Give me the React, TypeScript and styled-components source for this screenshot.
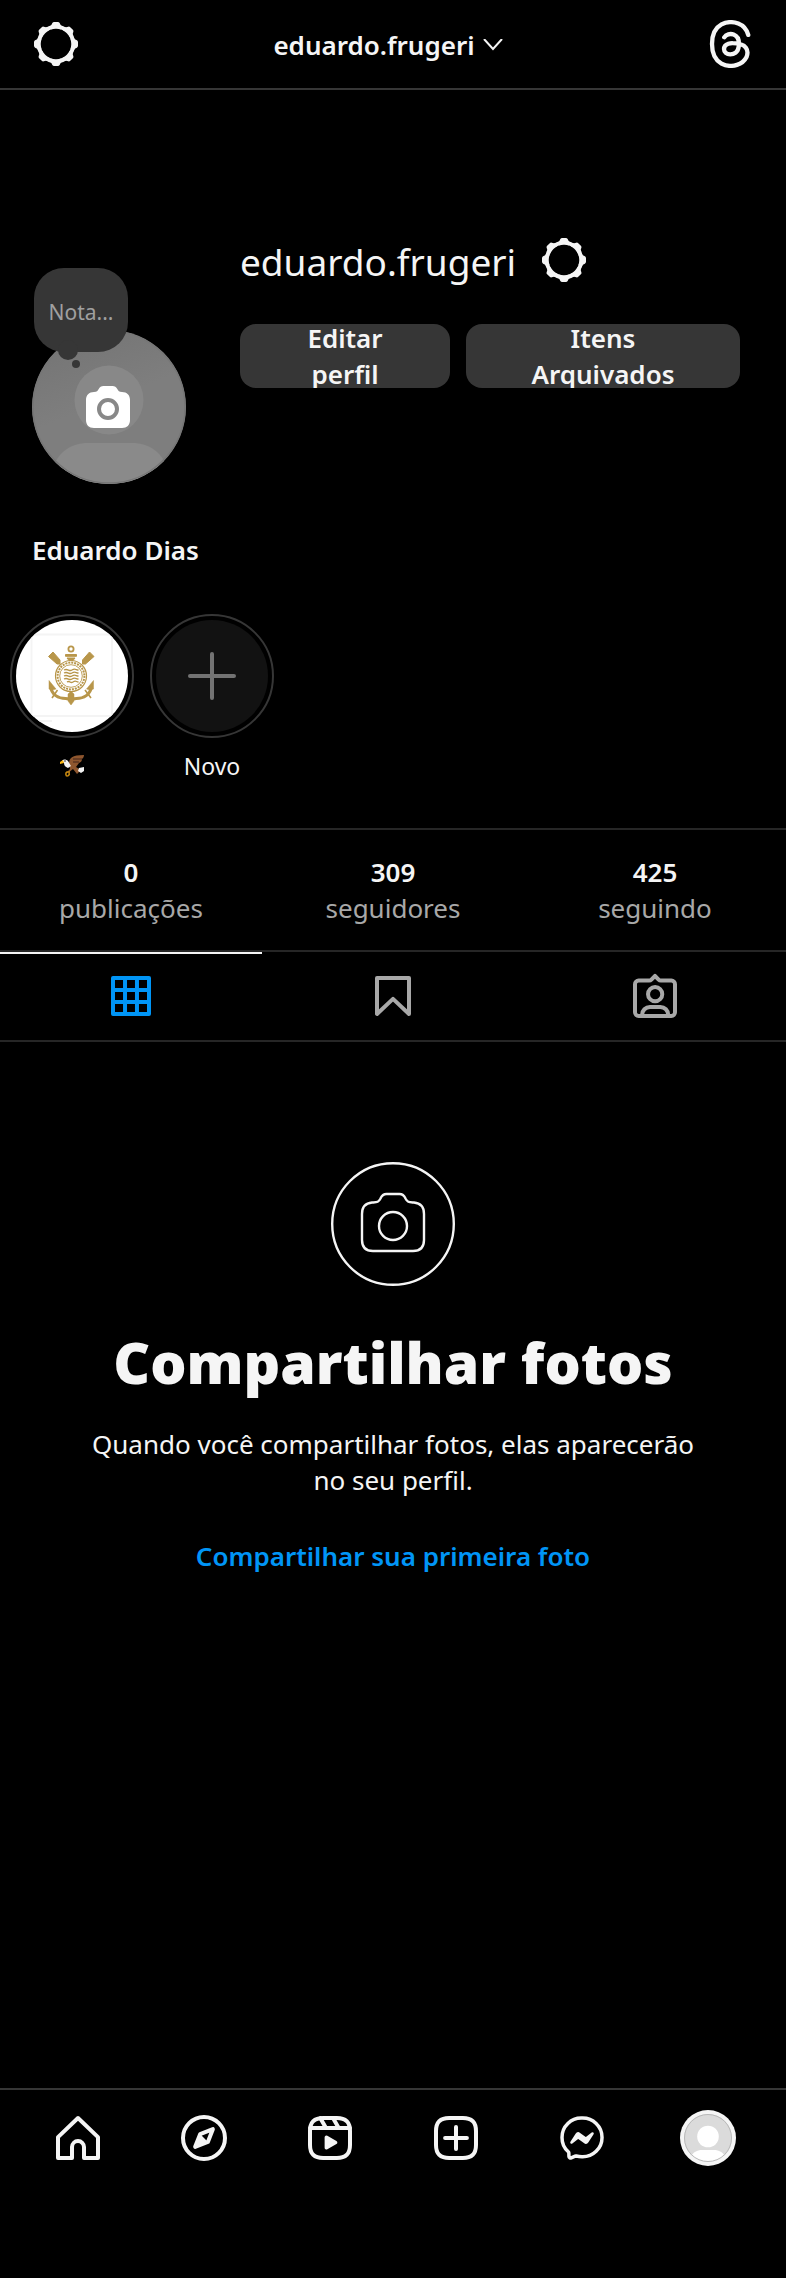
import React from "react";
import styled, { createGlobalStyle } from "styled-components";

const GlobalStyle = createGlobalStyle`
  * { box-sizing: border-box; }
  body {
    margin: 0;
    background: #000;
    color: #f5f5f5;
    font-family: "Noto Sans", "Open Sans", sans-serif;
    font-size: 26px;
    line-height: 36px;
  }
  h1, h2, p, ul, dl, dd { margin: 0; padding: 0; }
  ul { list-style: none; }
  a { color: inherit; text-decoration: none; }
  button {
    margin: 0;
    padding: 0;
    border: 0;
    background: none;
    color: inherit;
    font: inherit;
    cursor: pointer;
  }
  svg { display: block; flex: none; }
`;

const Page = styled.div`
  display: flex;
  flex-direction: column;
  min-height: 100vh;
`;

const TopBar = styled.header`
  display: flex;
  align-items: center;
  justify-content: space-between;
  height: 90px;
  padding: 0 32px;
  border-bottom: 2px solid #363636;
`;

const AccountSwitch = styled.button`
  display: flex;
  align-items: center;
  gap: 8px;
  padding: 2px 10px 0 0;
  font-weight: 600;
`;

const IconButton = styled.button`
  display: flex;
`;

const Main = styled.main`
  flex: 1;
`;

const Profile = styled.section`
  display: grid;
  grid-template-columns: 154px minmax(0, 500px);
  column-gap: 54px;
  padding: 144px 46px 0 32px;
`;

const AvatarArea = styled.div`
  position: relative;
  padding-top: 96px;
`;

const AvatarButton = styled.button`
  display: block;
`;

const Note = styled.button`
  position: absolute;
  top: 34px;
  left: 2px;
  width: 94px;
  height: 84px;
  padding-top: 4px;
  border-radius: 30px;
  background: #363636;
  color: #a0a0a0;
  font-size: 21px;
  line-height: 28px;

  &::before,
  &::after {
    content: "";
    position: absolute;
    border-radius: 50%;
    background: #363636;
  }
  &::before {
    top: 72px;
    left: 24px;
    width: 20px;
    height: 20px;
  }
  &::after {
    top: 92px;
    left: 38px;
    width: 8px;
    height: 8px;
  }
`;

const Details = styled.div`
  display: flex;
  flex-direction: column;
  gap: 38px;
`;

const NameRow = styled.div`
  display: flex;
  align-items: center;
  gap: 24px;
  height: 52px;
`;

const Username = styled.h2`
  padding-top: 4px;
  font-size: 37px;
  font-weight: 400;
  line-height: 48px;
`;

const Actions = styled.div`
  display: grid;
  grid-template-columns: 210fr 274fr;
  gap: 16px;
`;

const ActionButton = styled.button`
  display: flex;
  align-items: center;
  justify-content: center;
  height: 64px;
  padding: 0 32px;
  border-radius: 16px;
  overflow: hidden;
  background: #363636;
  font-weight: 600;
  text-align: center;
`;

const ButtonText = styled.span<{ $width: number }>`
  max-width: ${(p) => p.$width}px;
`;

const FullName = styled.h1`
  padding: 48px 32px 0;
  font-size: 26px;
  font-weight: 600;
  line-height: 36px;
`;

const Highlights = styled.ul`
  display: flex;
  gap: 16px;
  padding: 46px 10px 46px;
`;

const Highlight = styled.button`
  display: flex;
  flex-direction: column;
  align-items: center;
  gap: 12px;
  width: 124px;
  font-size: 23px;
  line-height: 32px;
`;

const Ring = styled.span<{ $fill: string }>`
  display: flex;
  width: 124px;
  height: 124px;
  padding: 4px;
  border: 2px solid #363636;
  border-radius: 50%;

  > svg {
    border-radius: 50%;
    background: ${(p) => p.$fill};
  }
`;

const Caption = styled.span`
  display: flex;
  align-items: center;
  height: 32px;
`;

const Stats = styled.ul`
  display: grid;
  grid-template-columns: repeat(3, 1fr);
  padding: 24px 0;
  border-top: 2px solid #262626;
  text-align: center;
`;

const Stat = styled.a`
  display: block;
  color: #a8a8a8;

  strong {
    display: block;
    color: #f5f5f5;
    font-weight: 600;
  }
`;

const Tabs = styled.nav`
  display: grid;
  grid-template-columns: repeat(3, 1fr);
  height: 92px;
  border-top: 2px solid #262626;
  border-bottom: 2px solid #262626;
`;

const Tab = styled.a<{ $active?: boolean }>`
  display: flex;
  align-items: center;
  justify-content: center;
  border-top: 2px solid ${(p) => (p.$active ? "#f5f5f5" : "transparent")};
  padding-bottom: 2px;
  color: ${(p) => (p.$active ? "#0095f6" : "#a8a8a8")};
`;

const Empty = styled.section`
  display: flex;
  flex-direction: column;
  align-items: center;
  padding: 120px 88px;
  text-align: center;
`;

const EmptyTitle = styled.h2`
  margin-top: 40px;
  font-family: "Open Sans", "Noto Sans", sans-serif;
  font-size: 57px;
  font-weight: 800;
  line-height: 72px;
`;

const EmptyText = styled.p`
  margin-top: 28px;
`;

const ShareButton = styled.button`
  margin-top: 40px;
  color: #0095f6;
  font-weight: 600;
`;

const BottomNav = styled.nav`
  display: flex;
  height: 190px;
  padding: 0 15px 92px;
  border-top: 2px solid #363636;
`;

const NavLink = styled.a`
  display: flex;
  flex: 1;
  align-items: center;
  justify-content: center;
`;

type IconProps = { children: React.ReactNode; viewBox?: string; width?: number };

const Icon = ({ children, viewBox = "0 0 24 24", width = 2 }: IconProps) => (
  <svg
    width="48"
    height="48"
    viewBox={viewBox}
    fill="none"
    stroke="currentColor"
    strokeWidth={width}
    strokeLinecap="round"
    strokeLinejoin="round"
    aria-hidden="true"
  >
    {children}
  </svg>
);

const GearIcon = () => (
  <Icon>
    <circle cx="12" cy="12" r="8.635" />
    <path d="M14.232 3.656a1.269 1.269 0 0 1-.796-.66L12.93 2h-1.86l-.505.996a1.269 1.269 0 0 1-.796.66m-.001 16.688a1.269 1.269 0 0 1 .796.66l.505.996h1.862l.505-.996a1.269 1.269 0 0 1 .796-.66M3.656 9.768a1.269 1.269 0 0 1-.66.796L2 11.07v1.862l.996.505a1.269 1.269 0 0 1 .66.796m16.688-.001a1.269 1.269 0 0 1 .66-.796L22 12.93v-1.86l-.996-.505a1.269 1.269 0 0 1-.66-.796M7.678 4.522a1.269 1.269 0 0 1-1.03.096l-1.06-.348L4.27 5.587l.348 1.062a1.269 1.269 0 0 1-.096 1.03m11.8 11.799a1.269 1.269 0 0 1 1.03-.096l1.06.348 1.318-1.317-.348-1.062a1.269 1.269 0 0 1 .096-1.03m-14.956.001a1.269 1.269 0 0 1 .096 1.03l-.348 1.06 1.317 1.318 1.062-.348a1.269 1.269 0 0 1 1.03.096m11.799-11.8a1.269 1.269 0 0 1-.096-1.03l.348-1.06-1.317-1.318-1.062.348a1.269 1.269 0 0 1-1.03-.096" />
  </Icon>
);

const ThreadsIcon = () => (
  <Icon viewBox="2 2 20 20" width={1.8}>
    <path d="M19.6 8.2c-1.5-5.5-7.2-5.3-7.2-5.3s-7.9-.5-7.9 9.1 7.9 9.1 7.9 9.1 4.5.2 6.5-3.7c1-2.6.2-5.8-5.8-5.8 0 0-3.6-.1-3.6 2.5 0 1.3 1.1 2.2 2.6 2.2s3.2-.8 3.5-3.1c.9-6-4.500-6.400-6-4" />
  </Icon>
);

const ChevronIcon = () => (
  <svg width="20" height="12" viewBox="0 0 20 12" fill="none" stroke="currentColor" strokeWidth="2" aria-hidden="true">
    <path d="m1 0 9 10 9-10" />
  </svg>
);

const AvatarArt = () => (
  <svg width="154" height="154" viewBox="0 0 154 154" aria-hidden="true">
    <defs>
      <clipPath id="avatar-clip"><circle cx="77" cy="77" r="77" /></clipPath>
      <linearGradient id="avatar-shade" x1="0.2" y1="0" x2="0.4" y2="0.5">
        <stop offset="0" stopColor="#747474" />
        <stop offset="1" stopColor="#7e7e7e" />
      </linearGradient>
    </defs>
    <g clipPath="url(#avatar-clip)">
      <rect width="154" height="154" fill="url(#avatar-shade)" />
      <circle cx="77" cy="70" r="34.500" fill="#888" />
      <path d="M22 135c5-12 16-22 34-22h44c18 0 29 10 34 22v19H22z" fill="#8a8a8a" />
    </g>
    <circle cx="77" cy="77" r="76" fill="none" stroke="#767676" strokeWidth="1.500" />
    <path
      d="M62 62c3 0 3.600-1 4.700-3 1-2 2.600-3 4.800-3h9c2.200 0 3.800 1 4.800 3 1.100 2 1.700 3 4.700 3 5 0 8 3 8 8v20c0 5-3 8-8 8H62c-5 0-8-3-8-8V70c0-5 3-8 8-8z"
      fill="#fff"
    />
    <circle cx="76" cy="79" r="9" fill="#fff" stroke="#888" strokeWidth="4" />
  </svg>
);

const CrestArt = () => (
  <svg width="112" height="112" viewBox="0 0 112 112" fill="none" stroke="#b8964a" aria-hidden="true">
    <path d="M14 14.500h83M14 96h83M15.500 14v82M96 14v82" stroke="#f4f4f4" strokeWidth="2" />
    <path d="M22 101h14" stroke="#f3f3f3" strokeWidth="2" />
    <circle cx="55" cy="29" r="2.600" strokeWidth="1.800" />
    <path d="M49.500 34.500h11v1.800h-11zM51 38h8l-2 2.500h-4z" fill="#b8964a" />
    <path d="m32.500 36.500 4.500-4.500 7 8v4h-3zM78 36.500 73.500 32l-7 8v4h3z" fill="#b8964a" />
    <path d="m41.500 70-5.500 8M69 70l6 8" strokeWidth="1.600" />
    <circle cx="55" cy="56" r="15.500" strokeWidth="1.200" />
    <circle cx="55" cy="56" r="13.400" strokeWidth="2" strokeDasharray="2 1" />
    <circle cx="55" cy="56" r="11.300" strokeWidth="0.900" />
    <path
      d="M48 50c4-2 5 2 8 0s4 0 6.500 0M48 53c4-2 5 2 8 0s4 0 6.500 0M48 56c4-2 5 2 8 0s4 0 6.500 0M48 59c4-2 5 2 8 0s4 0 6.500 0M51 62c3-2 3 2 6 0s3 0 5.500 0"
      strokeWidth="1.300"
    />
    <path d="M34.500 66c1 9 8 12.500 15 12.500 3 0 5 1 5.500 3 .5-2 2.500-3 5.500-3 7 0 14-3.500 15-12.500" strokeWidth="3" />
    <path d="M33 60.500 40 69l-3.500 1-3.500-1zM77.500 60.500 70.500 69l3.500 1 3.500-1zM52 74l3-3 3 3v7l-3 4-3-4z" fill="#b8964a" strokeWidth="0.500" />
  </svg>
);

const EagleArt = () => (
  <svg width="26" height="24" viewBox="0 0 26 24" role="img" aria-label="Águia">
    <path d="M10 10C10 4 13 1 25 1c0 2-1 3-2 4 0 2-1 3-3 4l-3 4 5 3-4 4-4-5-5 4-1-1 3-3z" fill="#8e562e" />
    <path d="M14 5h9M14 8h6" stroke="#42241b" strokeWidth="1" />
    <path d="M3 7c1-2 4-2 6 0l3 5-3 2c-3-1-4-3-4-5z" fill="#f2f2f2" />
    <path d="M4 6 1 8v2l4-1z" fill="#fcb813" />
    <path d="m20 14 5-1v4l-3 2-3-2z" fill="#f2f2f2" />
    <circle cx="6" cy="7" r="0.800" fill="#222" />
    <path d="M11 18H8c-2 1-1 4 0 4s3-1 2-3" fill="none" stroke="#c98a10" strokeWidth="1.600" />
  </svg>
);

const PlusArt = () => (
  <svg width="112" height="112" viewBox="0 0 112 112" stroke="#737373" strokeWidth="4" strokeLinecap="round" aria-hidden="true">
    <path d="M56 34v44M34 56h44" />
  </svg>
);

const CameraArt = () => (
  <svg width="124" height="124" viewBox="0 0 124 124" fill="none" stroke="currentColor" strokeWidth="2.400" aria-hidden="true">
    <circle cx="62" cy="62" r="60.800" />
    <path d="M31 52c0-8 4-11 10-11.500 5-.3 6.500 0 8.500-4 1.500-3.500 3-4.500 6-4.500h13c3 0 4.500 1 6 4.500 2 4 3.500 3.700 8.500 4C89 41 93 44 93 52v26c0 7-4 11-11 11H42c-7 0-11-4-11-11z" />
    <circle cx="62" cy="64" r="14" />
  </svg>
);

const GridIcon = () => (
  <Icon>
    <rect x="3" y="3" width="18" height="18" />
    <path d="M9.015 3v18M14.985 3v18M21 9.015H3M21 14.985H3" />
  </Icon>
);

const SavedIcon = () => (
  <Icon>
    <path d="M20 21 12 13.440 4 21V3h16z" />
  </Icon>
);

const TaggedIcon = () => (
  <Icon>
    <path d="M10.201 3.797 12 1.997l1.799 1.8a1.59 1.59 0 0 0 1.124.465h5.259A1.818 1.818 0 0 1 22 6.08v14.104a1.818 1.818 0 0 1-1.818 1.818H3.818A1.818 1.818 0 0 1 2 20.184V6.08a1.818 1.818 0 0 1 1.818-1.818h5.26a1.59 1.59 0 0 0 1.123-.465Z" />
    <path d="M18.598 22.002V21.4a3.949 3.949 0 0 0-3.948-3.949H9.495A3.949 3.949 0 0 0 5.546 21.4v.603" />
    <circle cx="12.072" cy="11.075" r="3.556" />
  </Icon>
);

const HomeIcon = () => (
  <Icon>
    <path d="M9.005 16.545a2.997 2.997 0 0 1 2.997-2.997A2.997 2.997 0 0 1 15 16.545V22h7V11.543L12 2 2 11.543V22h7.005Z" />
  </Icon>
);

const ExploreIcon = () => (
  <Icon>
    <path d="m13.941 13.953-6.360 2.471 2.479-6.368 6.360-2.471z" />
    <path d="m10.060 10.056 3.889 3.889-6.368 2.479z" fill="currentColor" stroke="none" />
    <circle cx="12" cy="12" r="10.500" />
  </Icon>
);

const roundedSquare =
  "M2 12v3.450c0 2.849.698 4.005 1.606 4.944.94.909 2.098 1.608 4.946 1.608h6.896c2.848 0 4.006-.7 4.946-1.608C21.302 19.455 22 18.300 22 15.450V8.552c0-2.849-.698-4.006-1.606-4.945C19.454 2.700 18.296 2 15.448 2H8.552c-2.848 0-4.006.699-4.946 1.607C2.698 4.547 2 5.703 2 8.552Z";

const ReelsIcon = () => (
  <Icon>
    <path d={roundedSquare} />
    <path d="M2.049 7.002h19.901M13.504 2.001l2.858 5.001M7.207 2.110l2.795 4.892" />
    <path
      d="M9.763 17.664a.908.908 0 0 1-.454-.787V11.630a.909.909 0 0 1 1.364-.788l4.545 2.624a.909.909 0 0 1 0 1.575l-4.545 2.624a.91.91 0 0 1-.91 0Z"
      fill="currentColor"
      stroke="none"
    />
  </Icon>
);

const CreateIcon = () => (
  <Icon>
    <path d={roundedSquare} />
    <path d="M6.545 12.001h10.910M12.003 6.545v10.910" />
  </Icon>
);

const MessengerIcon = () => (
  <Icon width={1.739}>
    <path d="M12.003 2.001a9.705 9.705 0 1 1 0 19.4 10.876 10.876 0 0 1-2.895-.384.798.798 0 0 0-.533.04l-1.984.876a.801.801 0 0 1-1.123-.708l-.054-1.78a.806.806 0 0 0-.27-.569 9.49 9.49 0 0 1-3.14-7.175 9.65 9.65 0 0 1 10-9.7Z" />
    <path
      d="M17.79 10.132a.659.659 0 0 0-.962-.873l-2.556 2.05a.63.63 0 0 1-.758.002L11.06 9.47a1.576 1.576 0 0 0-2.277.42l-2.567 3.98a.659.659 0 0 0 .961.875l2.556-2.049a.63.63 0 0 1 .759-.002l2.452 1.84a1.576 1.576 0 0 0 2.278-.42Z"
      fill="currentColor"
      stroke="none"
    />
  </Icon>
);

const MiniAvatar = () => (
  <svg width="56" height="56" viewBox="0 0 56 56" aria-hidden="true">
    <defs>
      <clipPath id="mini-clip"><circle cx="28" cy="28" r="24" /></clipPath>
    </defs>
    <circle cx="28" cy="28" r="28" fill="#f5f5f5" />
    <circle cx="28" cy="28" r="24" fill="#dbdbdb" />
    <g clipPath="url(#mini-clip)" fill="#fff">
      <circle cx="28" cy="26.500" r="10.800" />
      <path d="M11 47c2-5 6-7 11-7h12c5 0 9 2 11 7v9H11z" />
    </g>
    <circle cx="28" cy="28" r="23.500" fill="none" stroke="#b9b9b9" strokeWidth="1" />
  </svg>
);

const stats = [
  { value: "0", label: "publicações" },
  { value: "309", label: "seguidores" },
  { value: "425", label: "seguindo" },
];

const tabs = [
  { label: "Publicações", icon: <GridIcon />, active: true },
  { label: "Salvos", icon: <SavedIcon /> },
  { label: "Marcados", icon: <TaggedIcon /> },
];

const links = [
  { label: "Página inicial", icon: <HomeIcon /> },
  { label: "Explorar", icon: <ExploreIcon /> },
  { label: "Reels", icon: <ReelsIcon /> },
  { label: "Criar", icon: <CreateIcon /> },
  { label: "Mensagens", icon: <MessengerIcon /> },
  { label: "Perfil", icon: <MiniAvatar /> },
];

export default function App() {
  return (
    <Page>
      <GlobalStyle />
      <TopBar>
        <IconButton aria-label="Opções"><GearIcon /></IconButton>
        <AccountSwitch>
          eduardo.frugeri
          <ChevronIcon />
        </AccountSwitch>
        <IconButton aria-label="Threads"><ThreadsIcon /></IconButton>
      </TopBar>
      <Main>
        <Profile>
          <AvatarArea>
            <AvatarButton aria-label="Alterar foto do perfil"><AvatarArt /></AvatarButton>
            <Note>Nota...</Note>
          </AvatarArea>
          <Details>
            <NameRow>
              <Username>eduardo.frugeri</Username>
              <IconButton aria-label="Configurações"><GearIcon /></IconButton>
            </NameRow>
            <Actions>
              <ActionButton><ButtonText $width={100}>Editar perfil</ButtonText></ActionButton>
              <ActionButton><ButtonText $width={160}>Itens Arquivados</ButtonText></ActionButton>
            </Actions>
          </Details>
        </Profile>
        <FullName>Eduardo Dias</FullName>
        <Highlights>
          <li>
            <Highlight>
              <Ring $fill="#fff"><CrestArt /></Ring>
              <Caption><EagleArt /></Caption>
            </Highlight>
          </li>
          <li>
            <Highlight>
              <Ring $fill="#121212"><PlusArt /></Ring>
              <Caption>Novo</Caption>
            </Highlight>
          </li>
        </Highlights>
        <Stats>
          {stats.map((s) => (
            <li key={s.label}>
              <Stat href="#"><strong>{s.value}</strong>{s.label}</Stat>
            </li>
          ))}
        </Stats>
        <Tabs>
          {tabs.map((t) => (
            <Tab key={t.label} href="#" aria-label={t.label} $active={t.active}>{t.icon}</Tab>
          ))}
        </Tabs>
        <Empty>
          <CameraArt />
          <EmptyTitle>Compartilhar fotos</EmptyTitle>
          <EmptyText>Quando você compartilhar fotos, elas aparecerão no seu perfil.</EmptyText>
          <ShareButton>Compartilhar sua primeira foto</ShareButton>
        </Empty>
      </Main>
      <BottomNav>
        {links.map((l) => (
          <NavLink key={l.label} href="#" aria-label={l.label}>{l.icon}</NavLink>
        ))}
      </BottomNav>
    </Page>
  );
}
